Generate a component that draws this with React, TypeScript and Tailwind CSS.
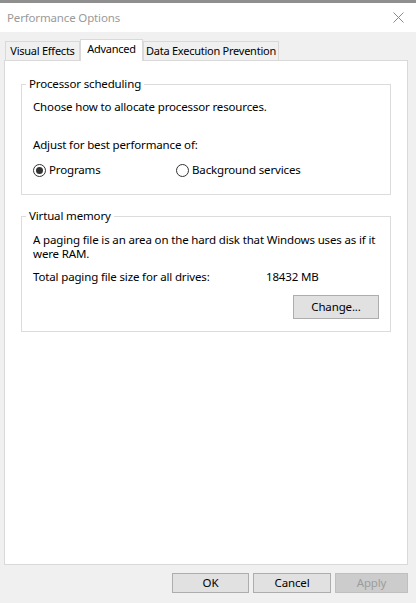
import React from "react";

const font = { fontFamily: '"Noto Sans", "Segoe UI", sans-serif' };

function Radio({ checked, label, wide }: { checked?: boolean; label: string; wide?: boolean }) {
  return (
    <label className={`flex items-center ${wide ? "w-[143px]" : ""}`}>
      <span className="w-[13px] h-[13px] rounded-full border border-[#333] bg-white flex items-center justify-center shrink-0">
        {checked && <span className="w-[7px] h-[7px] rounded-full bg-[#333]" />}
      </span>
      <span className="ml-[3px]">{label}</span>
    </label>
  );
}

function Tab({ label, active, w }: { label: string; active?: boolean; w: string }) {
  if (active) {
    return (
      <div className={`${w} h-[22px] -mb-px bg-white border border-b-0 border-[#d9d9d9] flex justify-center pt-[1px] relative z-10`}>
        {label}
      </div>
    );
  }
  return (
    <div className={`${w} h-[19px] bg-[#f0f0f0] border border-b-0 border-[#d9d9d9] flex items-center justify-center`}>
      {label}
    </div>
  );
}

export default function App() {
  return (
    <div
      className="w-[416px] h-[603px] flex flex-col bg-[#f0f0f0] text-[11.5px] tracking-[-0.15px] text-black overflow-hidden"
      style={font}
    >
      <div className="h-[3px] bg-[#8f8f8f]" />
      <div className="h-[29px] bg-white flex items-center justify-between pl-[7px] pr-[12px]">
        <span className="text-[#9a9a9a] text-[11.5px]">Performance Options</span>
        <svg width="11" height="11" viewBox="0 0 11 11">
          <path d="M0.5 0.5 L10.5 10.5 M10.5 0.5 L0.5 10.5" stroke="#8a8a8a" strokeWidth="1" />
        </svg>
      </div>

      <div className="flex items-end pl-[5px] pt-[7px] leading-[16px] text-[11px] tracking-[-0.25px]">
        <Tab label="Visual Effects" w="w-[75px]" />
        <Tab label="Advanced" active w="w-[63px]" />
        <Tab label="Data Execution Prevention" w="w-[136px]" />
      </div>

      <div className="ml-[4px] w-[404px] h-[505px] bg-white border border-[#d9d9d9] px-[16px] pt-[15px] leading-[16px]">
        <fieldset className="border border-[#dcdcdc] h-[119px] pl-[11px] pr-[8px]">
          <legend className="-ml-[7px] px-[3px]">Processor scheduling</legend>
          <div className="mt-[7px]">Choose how to allocate processor resources.</div>
          <div className="mt-[22px]">Adjust for best performance of:</div>
          <div className="mt-[9px] flex items-center">
            <Radio checked label="Programs" wide />
            <Radio label="Background services" />
          </div>
        </fieldset>

        <fieldset className="mt-[13px] border border-[#dcdcdc] pl-[11px] pr-[8px] pb-[12px]">
          <legend className="-ml-[7px] px-[3px]">Virtual memory</legend>
          <div className="mt-[9px] leading-[14px]">
            A paging file is an area on the hard disk that Windows uses as if it were RAM.
          </div>
          <div className="mt-[8px] flex">
            <span className="w-[233px]">Total paging file size for all drives:</span>
            <span>18432 MB</span>
          </div>
          <div className="mt-[10px] flex justify-end pr-[3px]">
            <button className="w-[86px] h-[24px] bg-[#e1e1e1] border border-[#adadad]">Change...</button>
          </div>
        </fieldset>
      </div>

      <div className="mt-[8px] flex justify-end gap-[4px] pr-[8px]">
        <button className="w-[77px] h-[20px] bg-[#e1e1e1] border border-[#adadad] leading-[16px]">OK</button>
        <button className="w-[78px] h-[20px] bg-[#e1e1e1] border border-[#adadad] leading-[16px]">Cancel</button>
        <button className="w-[73px] h-[20px] bg-[#cccccc] border border-[#bfbfbf] text-[#9d9d9d] leading-[16px]">Apply</button>
      </div>
    </div>
  );
}
